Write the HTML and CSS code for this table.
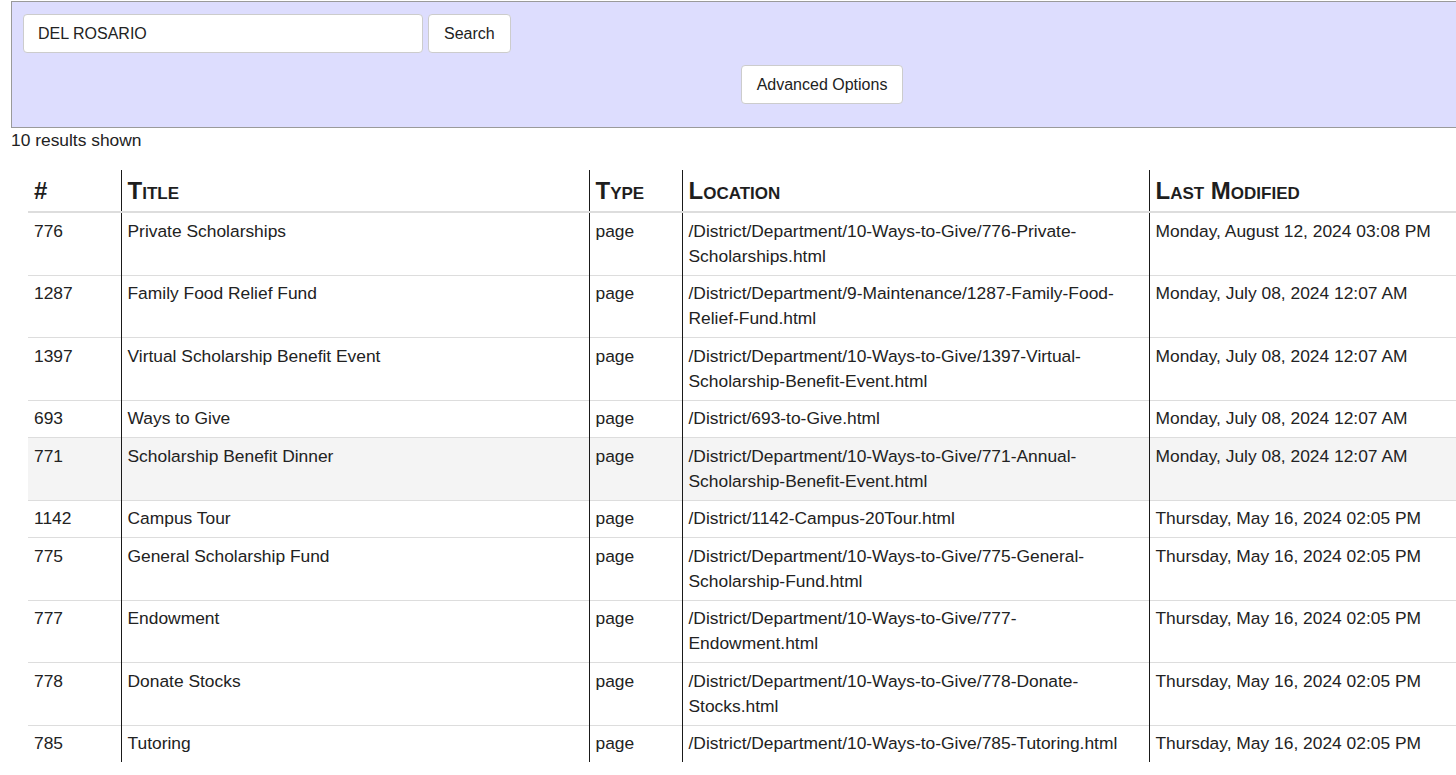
FILE: index.html
```html
<!DOCTYPE html>
<html>
<head>
<meta charset="utf-8">
<title>Search</title>
<link rel="stylesheet" href="styles.css">
</head>
<body>
<div class="page">
  <form class="search-panel">
    <div class="search-row">
      <input class="search-input" type="text" value="DEL ROSARIO">
      <button class="btn" type="button">Search</button>
    </div>
    <div class="options-row">
      <button class="btn" type="button">Advanced Options</button>
    </div>
  </form>
  <div class="results-count">10 results shown</div>
  <table class="results">
    <colgroup>
      <col class="c-num"><col class="c-title"><col class="c-type"><col class="c-loc"><col class="c-mod">
    </colgroup>
    <thead>
      <tr><th>#</th><th>Title</th><th>Type</th><th>Location</th><th>Last Modified</th></tr>
    </thead>
    <tbody>
      <tr><td>776</td><td>Private Scholarships</td><td>page</td><td>/District/Department/10-Ways-to-Give/776-Private-Scholarships.html</td><td>Monday, August 12, 2024 03:08 PM</td></tr>
      <tr><td>1287</td><td>Family Food Relief Fund</td><td>page</td><td>/District/Department/9-Maintenance/1287-Family-Food-Relief-Fund.html</td><td>Monday, July 08, 2024 12:07 AM</td></tr>
      <tr><td>1397</td><td>Virtual Scholarship Benefit Event</td><td>page</td><td>/District/Department/10-Ways-to-Give/1397-Virtual-Scholarship-Benefit-Event.html</td><td>Monday, July 08, 2024 12:07 AM</td></tr>
      <tr><td>693</td><td>Ways to Give</td><td>page</td><td>/District/693-to-Give.html</td><td>Monday, July 08, 2024 12:07 AM</td></tr>
      <tr class="hover"><td>771</td><td>Scholarship Benefit Dinner</td><td>page</td><td>/District/Department/10-Ways-to-Give/771-Annual-Scholarship-Benefit-Event.html</td><td>Monday, July 08, 2024 12:07 AM</td></tr>
      <tr><td>1142</td><td>Campus Tour</td><td>page</td><td>/District/1142-Campus-20Tour.html</td><td>Thursday, May 16, 2024 02:05 PM</td></tr>
      <tr><td>775</td><td>General Scholarship Fund</td><td>page</td><td>/District/Department/10-Ways-to-Give/775-General-Scholarship-Fund.html</td><td>Thursday, May 16, 2024 02:05 PM</td></tr>
      <tr><td>777</td><td>Endowment</td><td>page</td><td>/District/Department/10-Ways-to-Give/777-Endowment.html</td><td>Thursday, May 16, 2024 02:05 PM</td></tr>
      <tr><td>778</td><td>Donate Stocks</td><td>page</td><td>/District/Department/10-Ways-to-Give/778-Donate-Stocks.html</td><td>Thursday, May 16, 2024 02:05 PM</td></tr>
      <tr><td>785</td><td>Tutoring</td><td>page</td><td>/District/Department/10-Ways-to-Give/785-Tutoring.html</td><td>Thursday, May 16, 2024 02:05 PM</td></tr>
    </tbody>
  </table>
</div>
</body>
</html>
```
FILE: styles.css
```css
html, body {
  margin: 0;
  padding: 0;
  overflow: hidden;
  background: #fff;
}
body {
  font-family: "Liberation Sans", Arial, sans-serif;
  color: #222;
}
.page {
  padding: 1px 0 0 11px;
  width: 1700px;
}
.search-panel {
  box-sizing: border-box;
  width: 1622px;
  margin: 0;
  background: #ddddfe;
  border: 1px solid #9a9a9a;
  padding: 12px 11px 23px 11px;
  display: flex;
  flex-direction: column;
  gap: 12px;
}
.search-row {
  display: flex;
  gap: 5px;
}
.options-row {
  display: flex;
  justify-content: center;
}
.search-input {
  box-sizing: border-box;
  width: 400px;
  height: 39px;
  border: 1px solid #ccc;
  border-radius: 4px;
  background: #fff;
  padding: 0 14px;
  font-family: "Liberation Sans", Arial, sans-serif;
  font-size: 16px;
  color: #222;
}
.btn {
  box-sizing: border-box;
  height: 39px;
  border: 1px solid #ccc;
  border-radius: 4px;
  background: #fff;
  padding: 0 15px;
  font-family: "Liberation Sans", Arial, sans-serif;
  font-size: 16px;
  color: #222;
}
.results-count {
  font-size: 17.4px;
  line-height: 25px;
  margin-bottom: 17px;
}
.results {
  margin-left: 17px;
  border-collapse: collapse;
  table-layout: fixed;
  width: 1441px;
  font-size: 17.4px;
  line-height: 25px;
}
.c-num { width: 93px; }
.c-title { width: 468px; }
.c-type { width: 93px; }
.c-loc { width: 467px; }
.c-mod { width: 320px; }
.results th {
  text-align: left;
  font-size: 24px;
  font-weight: bold;
  font-variant: small-caps;
  line-height: 29px;
  padding: 6px 6px;
  border-bottom: 2px solid #ddd;
  color: #1e1e1e;
}
.results td {
  vertical-align: top;
  padding: 5.75px 6px;
  border-top: 1px solid #ddd;
}
.results th + th,
.results td + td {
  border-left: 1px solid #1a1a1a;
}
.results tbody tr:first-child td {
  border-top: none;
}
.results tr.hover td {
  background: #f4f4f4;
}
```
